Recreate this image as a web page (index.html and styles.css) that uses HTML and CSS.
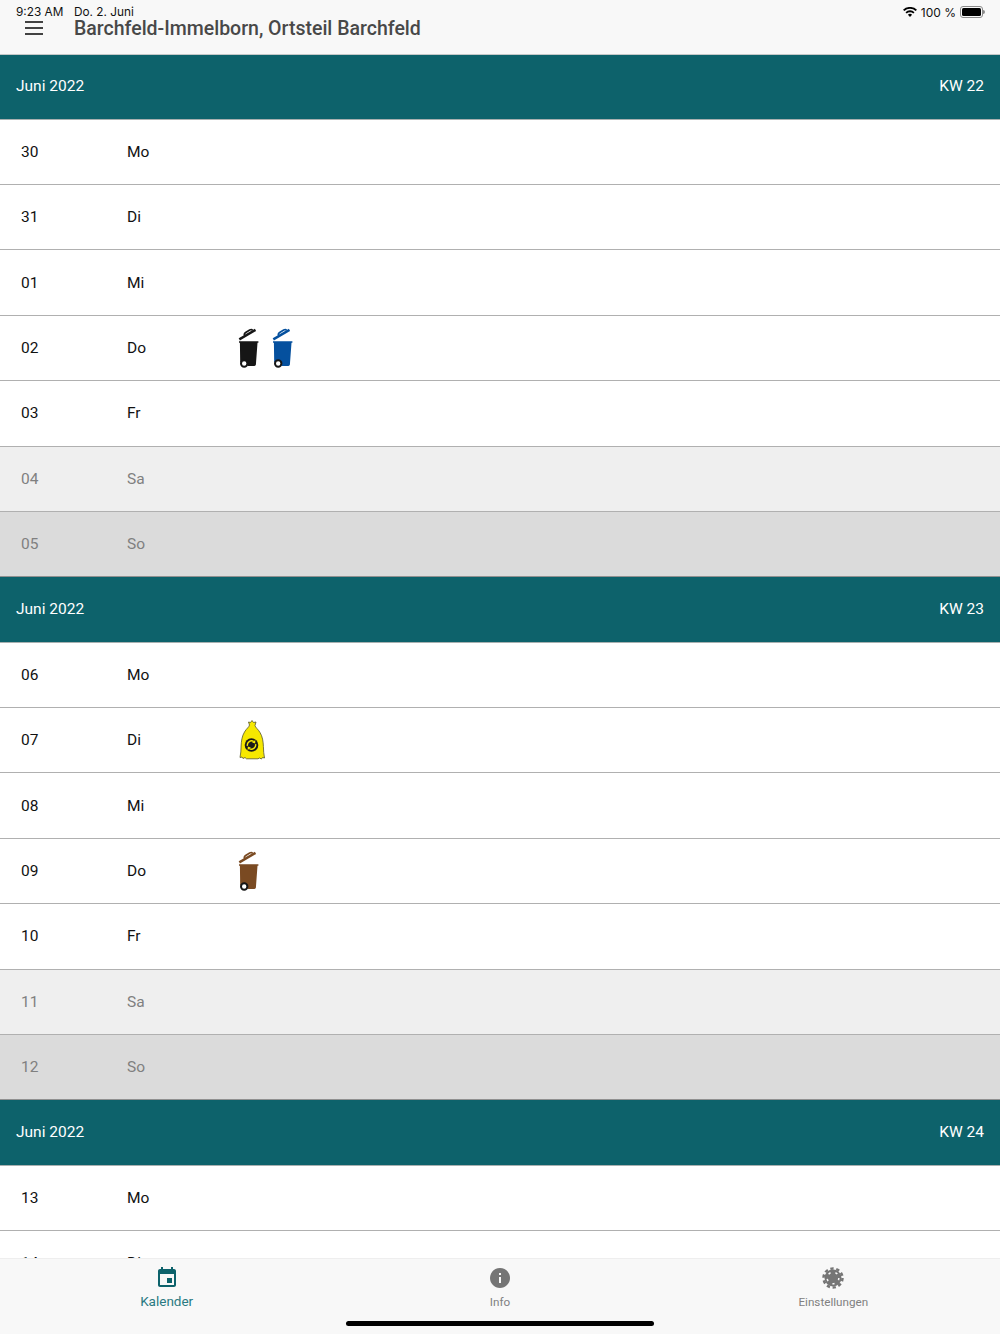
FILE: index.html
```html
<!DOCTYPE html>
<html lang="de">
<head>
    <meta charset="UTF-8">
    <meta name="viewport" content="width=device-width, initial-scale=1.0">
    <title>Kalender</title>
    <link rel="stylesheet" href="styles.css">
</head>
<body>
    <svg class="defs" width="0" height="0">
        <symbol id="bin" viewBox="0 0 22 40">
            <path d="M1 13.200h19.400v1.500h-.9l-1.600 21.800c-.1.9-.7 1.400-1.500 1.400H9.500a4.400 4.400 0 0 0-7.300-3.500L1.900 14.700H1z"/>
            <path d="M.7 10.300 16.900.8l1.200 2.100-16.200 9.500z"/>
            <path d="M5.600 7.500C5.100 5.500 6 4.300 7.600 3.400l3.700-2.100c1.600-.9 3.200-.7 4 .6l-1.500.9c-.4-.5-1.100-.5-1.700-.1L8.500 4.900c-.8.500-1.300 1-1.200 1.800z"/>
            <circle cx="6.200" cy="35.500" r="3.200" fill="#fff" stroke="#161616" stroke-width="2"/>
        </symbol>
    </svg>

    <header class="app-header">
        <div class="status-bar">
            <span class="status-time">9:23 AM</span>
            <span class="status-date">Do. 2. Juni</span>
            <span class="status-right">
                <svg class="wifi" viewBox="0 0 14 10" width="14" height="10">
                    <path d="M7 10 4.900 7.700a3 3 0 0 1 4.200 0zM3.700 6.500 2.500 5.200a6.400 6.400 0 0 1 9 0l-1.200 1.300a4.700 4.700 0 0 0-6.600 0zM1.400 4.100 0 2.800a10 10 0 0 1 14 0l-1.400 1.300a8.100 8.100 0 0 0-11.200 0z"/>
                </svg>
                <span>100 %</span>
                <span class="battery"><span class="battery-fill"></span></span>
            </span>
        </div>
        <div class="title-row">
            <span class="menu-icon"><i></i><i></i><i></i></span>
            <h1>Barchfeld-Immelborn, Ortsteil Barchfeld</h1>
        </div>
    </header>

    <main class="calendar">
        <div class="week-head"><span>Juni 2022</span><span>KW 22</span></div>
        <div class="day"><span class="num">30</span><span class="name">Mo</span></div>
        <div class="day"><span class="num">31</span><span class="name">Di</span></div>
        <div class="day"><span class="num">01</span><span class="name">Mi</span></div>
        <div class="day">
            <span class="num">02</span><span class="name">Do</span>
            <span class="pickups">
                <svg class="bin bin-black"><use href="#bin"/></svg>
                <svg class="bin bin-blue"><use href="#bin"/></svg>
            </span>
        </div>
        <div class="day"><span class="num">03</span><span class="name">Fr</span></div>
        <div class="day sat"><span class="num">04</span><span class="name">Sa</span></div>
        <div class="day sun"><span class="num">05</span><span class="name">So</span></div>

        <div class="week-head"><span>Juni 2022</span><span>KW 23</span></div>
        <div class="day"><span class="num">06</span><span class="name">Mo</span></div>
        <div class="day">
            <span class="num">07</span><span class="name">Di</span>
            <span class="pickups">
                <svg class="bag" viewBox="0 0 28 42">
                    <path d="M14 1.500l1.500 2 2.500-.5-1 3.500c.3 2 3 3.500 5 7 2.500 4 3.200 9 3.400 14 .1 4 .3 8 1.100 11.500l-2-.5-1 1.500-2-1-1.500.8H8.500L7 38.500l-2 1-1-1.500-2 .5c.8-3.500 1-7.500 1.100-11.500.2-5 .9-10 3.400-14 2-3.500 4.700-5 5-7L10.500 3l2 .5z" fill="#f6e800" stroke="#55552a" stroke-width=".8"/>
                    <circle cx="13.500" cy="26" r="6.800" fill="#1a1a1a"/>
                    <path d="M9.400 26.800a4.200 4.200 0 0 1 6.400-4.300M17.600 25.200a4.200 4.200 0 0 1-6.400 4.300" fill="none" stroke="#f6e800" stroke-width="1.400"/>
                    <path d="M17.300 21 17.200 24.600 14.100 23.400zM9.700 31l.1-3.600 3.100 1.200z" fill="#f6e800"/>
                </svg>
            </span>
        </div>
        <div class="day"><span class="num">08</span><span class="name">Mi</span></div>
        <div class="day">
            <span class="num">09</span><span class="name">Do</span>
            <span class="pickups">
                <svg class="bin bin-brown"><use href="#bin"/></svg>
            </span>
        </div>
        <div class="day"><span class="num">10</span><span class="name">Fr</span></div>
        <div class="day sat"><span class="num">11</span><span class="name">Sa</span></div>
        <div class="day sun"><span class="num">12</span><span class="name">So</span></div>

        <div class="week-head"><span>Juni 2022</span><span>KW 24</span></div>
        <div class="day"><span class="num">13</span><span class="name">Mo</span></div>
        <div class="day"><span class="num">14</span><span class="name">Di</span></div>
    </main>

    <footer class="tab-bar">
        <nav class="tabs">
            <div class="tab active">
                <svg viewBox="0 0 24 24" width="24" height="24">
                    <path d="M17 12h-5v5h5v-5zM16 1v2H8V1H6v2H5c-1.110 0-1.990.9-1.990 2L3 19c0 1.100.89 2 2 2h14c1.100 0 2-.9 2-2V5c0-1.100-.9-2-2-2h-1V1h-2zm3 18H5V8h14v11z"/>
                </svg>
                <span>Kalender</span>
            </div>
            <div class="tab">
                <svg viewBox="0 0 24 24" width="24" height="24">
                    <path d="M12 2C6.480 2 2 6.480 2 12s4.480 10 10 10 10-4.480 10-10S17.520 2 12 2zm1 15h-2v-6h2v6zm0-8h-2V7h2v2z"/>
                </svg>
                <span>Info</span>
            </div>
            <div class="tab">
                <svg viewBox="0 0 24 24" width="24" height="24">
                    <circle cx="12" cy="12" r="8.500"/>
                    <circle cx="12" cy="12" r="9.500" fill="none" stroke="#757575" stroke-width="2.500" stroke-dasharray="3.300 2.670"/>
                    <circle cx="12" cy="12" r="5.800" fill="none" stroke="#f8f8f8" stroke-width="1.500" stroke-dasharray="2.200 5.090"/>
                </svg>
                <span>Einstellungen</span>
            </div>
        </nav>
        <div class="home-indicator"></div>
    </footer>
</body>
</html>
```

FILE: styles.css
```css
* {
    box-sizing: border-box;
}

html,
body {
    height: 100%;
}

body {
    display: flex;
    flex-direction: column;
    margin: 0;
    overflow: hidden;
    font-family: Roboto, Arial, sans-serif;
    background-color: #fff;
}

.defs {
    display: block;
    height: 0;
}

/* header */
.app-header {
    flex: none;
    height: 55px;
    background-color: #f8f8f8;
    border-bottom: 1px solid #c4c8c8;
}

.status-bar {
    display: flex;
    align-items: center;
    height: 18px;
    padding: 6px 17px 0 16px;
    font-family: Inter, "Liberation Sans", sans-serif;
    font-size: 11.800px;
    color: #111;
}

.status-time {
    width: 58px;
}

.status-right {
    display: flex;
    align-items: center;
    gap: 4px;
    margin-left: auto;
    font-size: 12px;
}

.wifi {
    fill: #000;
}

.battery {
    position: relative;
    display: block;
    width: 23px;
    height: 12px;
    padding: 1px;
    border: 1px solid #8a8a8a;
    border-radius: 3px;
}

.battery::after {
    content: "";
    position: absolute;
    top: 3px;
    right: -3px;
    width: 2px;
    height: 4px;
    background-color: #8a8a8a;
    border-radius: 0 2px 2px 0;
}

.battery-fill {
    display: block;
    height: 100%;
    background-color: #000;
    border-radius: 1.500px;
}

.title-row {
    display: flex;
    align-items: center;
    height: 20px;
    padding-left: 25px;
}

.menu-icon {
    display: flex;
    flex-direction: column;
    gap: 4px;
    width: 18px;
    margin-right: 31px;
}

.menu-icon i {
    display: block;
    height: 2px;
    background-color: #424242;
}

h1 {
    position: relative;
    top: 1px;
    margin: 0;
    font-size: 19.500px;
    font-weight: 500;
    line-height: 20px;
    color: #484848;
    white-space: nowrap;
}

/* calendar list */
.calendar {
    flex: 1;
    min-height: 0;
    overflow: hidden;
}

.week-head {
    display: flex;
    align-items: center;
    justify-content: space-between;
    height: 65.375px;
    padding: 0 16px 2px;
    font-size: 15.500px;
    color: #fff;
    background-color: #0d626b;
    border-bottom: 1px solid #a8b0b0;
}

.week-head:first-child {
    height: 64.700px;
}

.day {
    display: flex;
    align-items: center;
    height: 65.375px;
    padding-left: 21px;
    font-size: 15.500px;
    color: #111;
    background-color: #fff;
    border-bottom: 1px solid #b0b0b0;
}

.day.sat {
    color: #808080;
    background-color: #efefef;
}

.day.sun {
    color: #808080;
    background-color: #dbdbdb;
    border-bottom-color: #909090;
}

.num {
    width: 106px;
}

.name {
    width: 111px;
}

.pickups {
    display: flex;
    gap: 12px;
}

.bin {
    display: block;
    width: 22px;
    height: 40px;
}

.bin-black {
    fill: #161616;
}

.bin-blue {
    fill: #05509e;
}

.bin-brown {
    fill: #7a4a22;
}

.bag {
    display: block;
    width: 28px;
    height: 42px;
}

/* bottom tabs */
.tab-bar {
    flex: none;
    display: flex;
    flex-direction: column;
    height: 76px;
    background-color: #f8f8f8;
    border-top: 1px solid #eeeeee;
}

.tabs {
    display: flex;
    flex: 1;
    padding-top: 7px;
}

.tab {
    display: flex;
    flex: 1;
    flex-direction: column;
    align-items: center;
    font-size: 11.700px;
    color: #808080;
}

.tab svg {
    display: block;
    fill: #757575;
}

.tab span {
    margin-top: 4px;
    line-height: 16px;
}

.tab.active {
    font-size: 13.500px;
    color: #2a7a82;
}

.tab.active span {
    margin-top: 3px;
}

.tab.active svg {
    fill: #0d626b;
}

.home-indicator {
    align-self: center;
    width: 308px;
    height: 5px;
    margin-bottom: 8px;
    background-color: #000;
    border-radius: 3px;
}
```
